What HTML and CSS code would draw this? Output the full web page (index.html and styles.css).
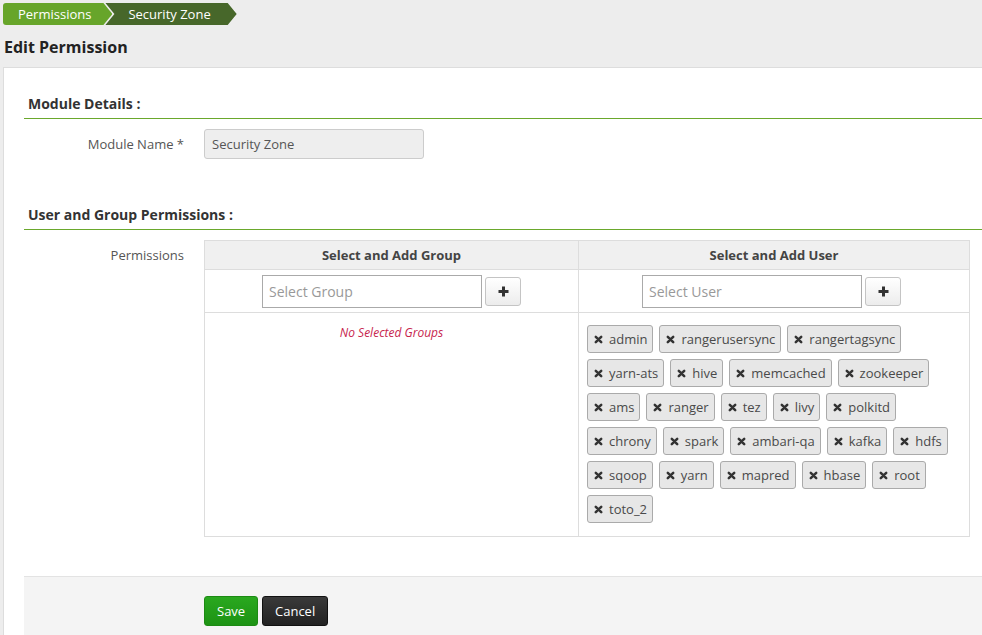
FILE: index.html
```html
<!DOCTYPE html>
<html>
<head>
<meta charset="utf-8">
<link rel="stylesheet" href="styles.css">
</head>
<body>
<nav class="crumbs">
  <span class="crumb crumb-first">Permissions</span>
  <span class="crumb crumb-last">Security Zone</span>
</nav>
<h1 class="page-title">Edit Permission</h1>
<div class="panel">
  <h2 class="section-title">Module Details :</h2>
  <div class="form-row">
    <label class="form-label">Module Name *</label>
    <div class="form-control readonly">Security Zone</div>
  </div>
  <h2 class="section-title second">User and Group Permissions :</h2>
  <div class="form-row">
    <label class="form-label perm-label">Permissions</label>
    <table class="perm-table">
      <thead>
        <tr><th class="col-group">Select and Add Group</th><th class="col-user">Select and Add User</th></tr>
      </thead>
      <tbody>
        <tr class="select-row">
          <td><div class="add-group"><input class="select-input" placeholder="Select Group"><button class="plus-btn"><svg width="11" height="11" viewBox="0 0 11 11"><path d="M5.5 0.5V10.5M0.5 5.5H10.5" stroke="#333" stroke-width="3"/></svg></button></div></td>
          <td><div class="add-group user"><input class="select-input" placeholder="Select User"><button class="plus-btn"><svg width="11" height="11" viewBox="0 0 11 11"><path d="M5.5 0.5V10.5M0.5 5.5H10.5" stroke="#333" stroke-width="3"/></svg></button></div></td>
        </tr>
        <tr class="list-row">
          <td class="empty-cell"><span class="empty-msg">No Selected Groups</span></td>
          <td class="tags-cell"><div class="tags" id="tags"></div></td>
        </tr>
      </tbody>
    </table>
  </div>
  <div class="form-actions">
    <button class="btn btn-save">Save</button>
    <button class="btn btn-cancel">Cancel</button>
  </div>
</div>
<script>
var users = ["admin","rangerusersync","rangertagsync","yarn-ats","hive","memcached","zookeeper","ams","ranger","tez","livy","polkitd","chrony","spark","ambari-qa","kafka","hdfs","sqoop","yarn","mapred","hbase","root","toto_2"];
var box = document.getElementById("tags");
users.forEach(function(u){
  var t = document.createElement("span");
  t.className = "tag";
  t.innerHTML = '<svg class="tag-x" width="9" height="9" viewBox="0 0 10 10"><path d="M2 2L8 8M8 2L2 8" stroke="#333" stroke-width="2.8" stroke-linecap="round"/></svg><span></span>';
  t.lastChild.textContent = u;
  box.appendChild(t);
});
</script>
</body>
</html>
```

FILE: styles.css
```css
html, body { margin: 0; padding: 0; overflow: hidden; }
body {
  background: #ededed;
  font-family: "Open Sans", "Liberation Sans", sans-serif;
  font-size: 13px;
  color: #333;
  width: 982px;
  height: 635px;
}
.crumbs { display: flex; padding: 3px 0 0 3px; height: 22px; }
.crumb {
  display: flex; align-items: center; height: 22px; color: #fff; font-size: 13px;
}
.crumb-first {
  background: #67a52a;
  padding: 0 21px 0 15px;
  border-radius: 3px 0 0 3px;
  clip-path: polygon(0 0, calc(100% - 9px) 0, 100% 50%, calc(100% - 9px) 100%, 0 100%);
}
.crumb-last {
  background: #47672a;
  margin-left: -7px;
  padding: 0 26px 0 23px;
  clip-path: polygon(0 0, calc(100% - 9px) 0, 100% 50%, calc(100% - 9px) 100%, 0 100%, 9px 50%);
}
.page-title { margin: 12px 0 0 4px; font-size: 16px; font-weight: 700; line-height: 20px; color: #222; }
.panel {
  margin: 10px -30px 0 3px;
  background: #fff;
  border: 1px solid #ddd;
  padding: 20px 0 0 20px;
  height: 600px;
}
.section-title {
  margin: 0; padding: 6px 0 5px 4px; font-size: 14px; font-weight: 700; line-height: 19px;
  color: #333; border-bottom: 1px solid #6aa82c;
}
.section-title.second { margin-top: 40px; }
.form-row { display: flex; margin-top: 10px; }
.form-label {
  width: 160px; text-align: right; margin-right: 20px; color: #555; line-height: 30px;
}
.perm-label { line-height: 30px; }
.form-control.readonly {
  width: 204px; height: 28px; line-height: 28px; padding: 0 7px;
  background: #eee; border: 1px solid #ccc; border-radius: 3px; color: #555;
}
.perm-table { border-collapse: collapse; width: 766px; table-layout: fixed; }
.perm-table th, .perm-table td { border: 1px solid #ddd; padding: 0; }
.perm-table th { background: #f0f0f0; height: 28px; font-weight: 700; color: #444; font-size: 13px; }
.col-group { width: 373px; }
.select-row td { height: 42px; }
.add-group { display: flex; justify-content: center; align-items: center; gap: 3px; }
.add-group.user { margin-right: 5px; }
.select-input {
  width: 220px; height: 33px; box-sizing: border-box; border: 1px solid #aaa; padding: 0 6px;
  font-family: inherit; font-size: 14px; color: #333;
}
.select-input::placeholder { color: #999; }
.plus-btn {
  width: 36px; height: 29px; border: 1px solid #c4c4c4; border-radius: 3px;
  background: linear-gradient(#fff, #ececec); display: flex; align-items: center; justify-content: center; padding: 0;
}
.list-row td { vertical-align: top; height: 223px; }
.empty-cell { text-align: center; }
.empty-msg { display: block; margin-top: 11px; color: #c7254e; font-style: italic; font-size: 12px; }
.tags { display: flex; flex-wrap: wrap; gap: 6px 6px; padding: 12px 8px 0 8px; }
.tag {
  display: flex; align-items: center; gap: 6px; height: 26px; padding: 0 5px 0 6px;
  background: #e7e7e7; border: 1px solid #aaa; border-radius: 3px; color: #4a4a4a; font-size: 13px;
}
.tag-x { flex: none; }
.form-actions {
  margin-top: 39px; background: #f4f4f4; border-top: 1px solid #e3e3e3;
  padding: 19px 0 0 180px; height: 80px; display: flex; gap: 4px; align-items: flex-start;
}
.btn {
  height: 30px; border-radius: 3px; font-family: inherit; font-size: 13px; color: #fff; padding: 0 12px;
}
.btn-save { background: linear-gradient(#2aa81f, #1d9314); border: 1px solid #1c8a13; width: 54px; }
.btn-cancel { background: linear-gradient(#3a3a3a, #222); border: 1px solid #111; width: 66px; }
```
